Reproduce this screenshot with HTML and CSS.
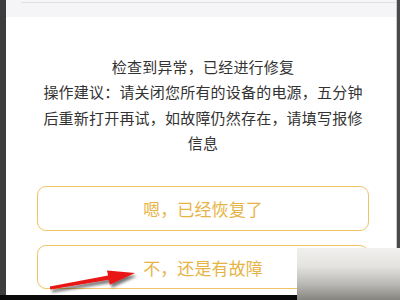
FILE: index.html
```html
<!DOCTYPE html>
<html lang="zh-CN">
<head>
  <meta charset="UTF-8" />
  <meta name="viewport" content="width=device-width, initial-scale=1.0"/>
  <title>故障检测</title>
  <link rel="stylesheet" href="styles.css">
</head>
<body>

  <div class="screen">
    <div class="edge-left"></div>

    <div class="panel">
      <div class="top-band">
        <div class="top-line"></div>
      </div>

      <!-- Result dialog -->
      <div class="dialog">
        <div class="message">
          <p>检查到异常，已经进行修复</p>
          <p>操作建议：请关闭您所有的设备的电源，五分钟后重新打开再试，如故障仍然存在，请填写报修信息</p>
        </div>
        <button class="choice">嗯，已经恢复了</button>
        <button class="choice">不，还是有故障</button>
      </div>
    </div>

    <div class="edge-right"></div>

    <!-- red annotation arrow -->
    <svg class="arrow" width="400" height="300" viewBox="0 0 400 300">
      <defs>
        <filter id="shade" x="-20%" y="-50%" width="140%" height="200%">
          <feGaussianBlur in="SourceAlpha" stdDeviation="1.6"/>
          <feOffset dx="1.5" dy="2.5" result="blur"/>
          <feComponentTransfer><feFuncA type="linear" slope="0.55"/></feComponentTransfer>
          <feMerge><feMergeNode/><feMergeNode in="SourceGraphic"/></feMerge>
        </filter>
      </defs>
      <polygon filter="url(#shade)" fill="#e91414"
        points="49.8,286.6 108.1,275.6 107.0,270.6 135,273 109.8,284.8 108.8,279.8 50.3,289.4"/>
    </svg>

    <div class="bottom-bar"></div>
    <div class="corner-box"></div>
  </div>

</body>
</html>
```

FILE: styles.css
```css
* {
  box-sizing: border-box;
}

body {
  margin: 0;
  font-family: "Noto Sans CJK SC", "Noto Sans", sans-serif;
  background-color: #fff;
}

.screen {
  position: relative;
  display: flex;
  width: 400px;
  height: 300px;
  overflow: hidden;
}

.edge-left {
  width: 6px;
  background-color: #3d3d3d;
}

.edge-right {
  width: 4px;
  background-color: #4a4a4a;
  border-left: 1px solid #c9c9c9;
}

.panel {
  flex: 1;
  background-color: #fff;
}

.top-band {
  height: 17px;
  padding: 2px 0 0 15px;
  background-color: #f5f4f7;
}

.top-line {
  height: 1px;
  background-color: #e1e0e4;
}

.dialog {
  display: flex;
  flex-direction: column;
  padding: 37px 27px 0 31px;
}

.message {
  margin: 0 6px;
  text-align: center;
  font-size: 15px;
  line-height: 25.3px;
  letter-spacing: 0.2px;
  color: #333;
}

.message p {
  margin: 0;
}

.choice {
  height: 45px;
  margin-top: 31px;
  font-family: inherit;
  font-size: 17px;
  letter-spacing: 0.1px;
  color: #e7b446;
  background-color: #fff;
  border: 1.5px solid #eec466;
  border-radius: 9px;
}

.choice + .choice {
  margin-top: 14px;
  height: 44px;
}

.arrow {
  position: absolute;
  left: 0;
  top: 0;
}

.bottom-bar {
  position: absolute;
  left: 0;
  bottom: 0;
  width: 297px;
  height: 5px;
  background-color: #0a0a0a;
}

.corner-box {
  position: absolute;
  right: 0;
  bottom: 0;
  width: 103px;
  height: 52px;
  background: linear-gradient(to bottom, #f1f0ee 0%, #e4e3e0 35%, #b9b8b4 70%, #85847f 100%);
}
```
